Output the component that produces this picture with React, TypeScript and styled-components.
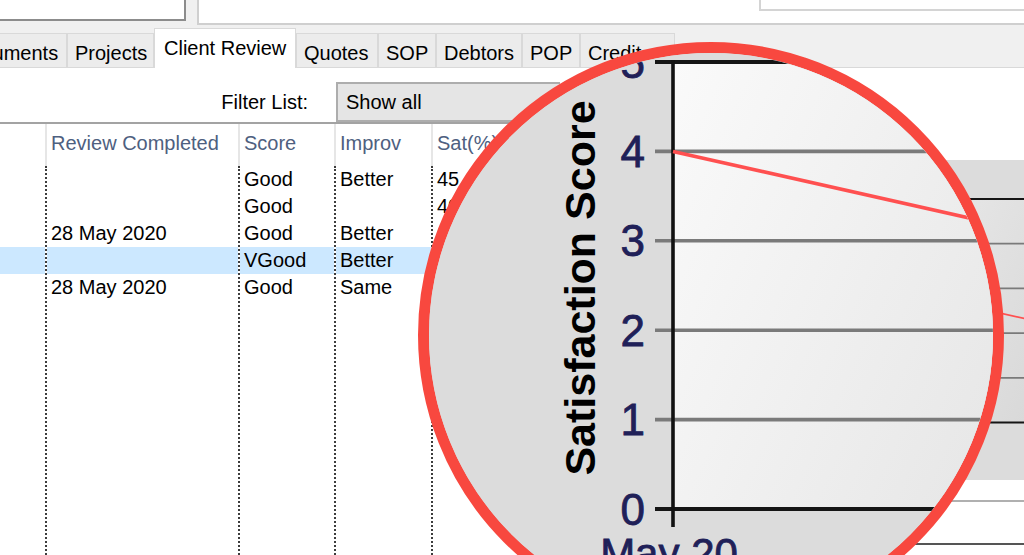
import React from 'react';
import styled, { createGlobalStyle } from 'styled-components';

const GlobalStyle = createGlobalStyle`
	html,
	body {
		margin: 0;
		padding: 0;
		overflow: hidden;
		background: #ffffff;
	}
	body {
		font-family: 'Liberation Sans', Arial, sans-serif;
	}
`;

const Screen = styled.div`
	position: relative;
	display: flex;
	flex-direction: column;
	width: 1024px;
	height: 555px;
	overflow: hidden;
	background: #f0f0f0;
	color: #000;
	font-size: 20px;
`;

/* top edge of the window: bits of the fields above the tabs */
const TopStrip = styled.div`
	display: flex;
	align-items: flex-start;
	height: 28px;
`;
const NameBox = styled.div`
	box-sizing: border-box;
	width: 186px;
	height: 21px;
	background: #fff;
	border-right: 2px solid #8c8c8c;
	border-bottom: 2px solid #8c8c8c;
`;
const DetailBox = styled.div`
	box-sizing: border-box;
	display: flex;
	justify-content: flex-end;
	flex: 1;
	height: 25px;
	margin-left: 11px;
	background: #fff;
	border-left: 2px solid #cfcfcf;
	border-bottom: 2px solid #cfcfcf;
`;
const NoteBox = styled.div`
	box-sizing: border-box;
	width: 265px;
	height: 11px;
	border-left: 2px solid #d4d4d4;
	border-bottom: 2px solid #d4d4d4;
`;

const TabBar = styled.div`
	display: flex;
	align-items: flex-end;
	height: 40px;
	box-shadow: inset 0 -1px 0 #d9d9d9;
`;
const TabRow = styled.div`
	display: flex;
	align-items: flex-end;
	margin-left: -51px;
`;
const Tab = styled.div<{ $w: number; $active?: boolean }>`
	box-sizing: border-box;
	display: flex;
	align-items: center;
	flex: 0 0 ${(p) => p.$w}px;
	height: ${(p) => (p.$active ? 40 : 35)}px;
	padding: ${(p) => (p.$active ? '0 0 0 9px' : '5px 0 0 7px')};
	background: ${(p) => (p.$active ? '#ffffff' : '#ececec')};
	border: 1px solid #d9d9d9;
	border-bottom: ${(p) => (p.$active ? 'none' : '1px solid #d9d9d9')};
	white-space: nowrap;
	overflow: hidden;
`;

const Content = styled.div`
	display: flex;
	flex: 1;
	min-height: 0;
	background: #fff;
`;
const ListPane = styled.div`
	display: flex;
	flex-direction: column;
	flex: 0 0 560px;
`;
const FilterRow = styled.div`
	display: flex;
	align-items: center;
	height: 40px;
	margin-top: 14px;
`;
const FilterLabel = styled.label`
	flex: 0 0 308px;
	text-align: right;
`;
const Dropdown = styled.div`
	box-sizing: border-box;
	display: flex;
	align-items: center;
	flex: 1;
	height: 40px;
	margin-left: 28px;
	padding-left: 8px;
	background: #e5e5e5;
	border: 2px solid #adadad;
	border-right: none;
`;

const ListView = styled.div`
	display: flex;
	flex-direction: column;
	flex: 1;
	border-top: 2px solid #a3a3a3;
`;
const HeaderRow = styled.div`
	display: flex;
	height: 42px;
`;
const HeaderCell = styled.div<{ $w: number; $divider: boolean }>`
	box-sizing: border-box;
	display: flex;
	align-items: center;
	width: ${(p) => p.$w}px;
	padding: 0 0 4px 4px;
	border-left: ${(p) => (p.$divider ? '2px solid #e6e6e6' : 'none')};
	color: #4e6080;
	white-space: nowrap;
	overflow: hidden;
`;
const ListBody = styled.div`
	display: flex;
	flex: 1;
`;
const Column = styled.div<{ $w: number; $divider: boolean }>`
	box-sizing: border-box;
	width: ${(p) => p.$w}px;
	border-left: ${(p) => (p.$divider ? '2px dotted #3c3c3c' : 'none')};
`;
const Cell = styled.div<{ $selected: boolean }>`
	height: 27px;
	line-height: 27px;
	padding-left: 4px;
	white-space: nowrap;
	overflow: hidden;
	background: ${(p) => (p.$selected ? '#cce8ff' : 'transparent')};
`;

const ChartPane = styled.div`
	display: flex;
	flex-direction: column;
	flex: 1;
	padding-top: 92px;
`;
const ChartPanel = styled.div`
	height: 320px;
	background: #dcdcdc;

	svg {
		display: block;
	}
`;
const LowerGrid = styled.div`
	height: 41px;
	margin-top: 20px;
	border-top: 2px solid #b0b0b0;
	border-bottom: 2px solid #555555;
`;

/* magnifier ring drawn over the page */
const Lens = styled.div`
	position: absolute;
	left: 418px;
	top: 42px;
	box-sizing: border-box;
	width: 586px;
	height: 586px;
	border: 11px solid #f8483f;
	border-radius: 50%;
	overflow: hidden;
	background: #dcdcdc;

	svg {
		display: block;
	}
`;

const TABS = [
	{ label: 'Documents', w: 118 },
	{ label: 'Projects', w: 87 },
	{ label: 'Client Review', w: 142, active: true },
	{ label: 'Quotes', w: 82 },
	{ label: 'SOP', w: 58 },
	{ label: 'Debtors', w: 86 },
	{ label: 'POP', w: 58 },
	{ label: 'Credit', w: 95 },
];

const COLS = [
	{ title: '', w: 45 },
	{ title: 'Review Completed', w: 193 },
	{ title: 'Score', w: 96 },
	{ title: 'Improv', w: 97 },
	{ title: 'Sat(%)', w: 129 },
];

const ROWS = [
	['', '', 'Good', 'Better', '45'],
	['', '', 'Good', '', '40'],
	['', '28 May 2020', 'Good', 'Better', '60'],
	['', '', 'VGood', 'Better', '80'],
	['', '28 May 2020', 'Good', 'Same', '60'],
];
const SELECTED = 3;

// chart is drawn in page coordinates so the lens can reuse it at 2x
const GRID_Y = [199, 243.7, 288.4, 333.1, 377.8, 422.5];
const AXIS_X = 692;
const FONT = "'Liberation Sans', Arial, sans-serif";
const NAVY = '#202058';

const ChartLayer: React.FC<{ id: string }> = ({ id }) => (
	<>
		<defs>
			<linearGradient id={`${id}-plot`} x1="0" y1="0" x2="1" y2="0.25">
				<stop offset="0" stopColor="#fafafa" />
				<stop offset="1" stopColor="#d9d9d9" />
			</linearGradient>
		</defs>
		<rect x={540} y={150} width={560} height={350} fill="#dcdcdc" />
		<rect
			x={AXIS_X}
			y={GRID_Y[0]}
			width={408}
			height={GRID_Y[5] - GRID_Y[0]}
			fill={`url(#${id}-plot)`}
		/>
		{GRID_Y.map((y, i) => {
			const edge = i === 0 || i === GRID_Y.length - 1;
			return (
				<line
					key={y}
					x1={683}
					x2={1100}
					y1={y}
					y2={y}
					stroke={edge ? '#151515' : '#7a7a7a'}
					strokeWidth={edge ? 2.1 : 1.8}
				/>
			);
		})}
		<line
			x1={AXIS_X}
			x2={AXIS_X}
			y1={GRID_Y[0] - 1}
			y2={431.5}
			stroke="#111"
			strokeWidth={1.8}
		/>
		{GRID_Y.map((y, i) => (
			<text
				key={`l${y}`}
				x={678}
				y={y}
				textAnchor="end"
				dominantBaseline="central"
				fontFamily={FONT}
				fontSize={22}
				fill={NAVY}
				stroke={NAVY}
				strokeWidth={0.4}>
				{5 - i}
			</text>
		))}
		<text
			transform="translate(645.5 312) rotate(-90)"
			textAnchor="middle"
			dominantBaseline="central"
			fontFamily={FONT}
			fontWeight="bold"
			fontSize={21.5}
			fill="#000">
			Satisfaction Score
		</text>
		<text
			x={690}
			y={452}
			textAnchor="middle"
			fontFamily={FONT}
			fontSize={21}
			fill={NAVY}
			stroke={NAVY}
			strokeWidth={0.4}>
			May 20
		</text>
		<line
			x1={AXIS_X}
			y1={GRID_Y[1]}
			x2={1100}
			y2={GRID_Y[1] + 0.225 * (1100 - AXIS_X)}
			stroke="#ff5050"
			strokeWidth={1.8}
		/>
	</>
);

const App: React.FC = () => {
	return (
		<Screen>
			<GlobalStyle />
			<TopStrip>
				<NameBox />
				<DetailBox>
					<NoteBox />
				</DetailBox>
			</TopStrip>
			<TabBar>
				<TabRow>
					{TABS.map((t) => (
						<Tab key={t.label} $w={t.w} $active={t.active}>
							{t.label}
						</Tab>
					))}
				</TabRow>
			</TabBar>
			<Content>
				<ListPane>
					<FilterRow>
						<FilterLabel>Filter List:</FilterLabel>
						<Dropdown>Show all</Dropdown>
					</FilterRow>
					<ListView>
						<HeaderRow>
							{COLS.map((c, i) => (
								<HeaderCell key={i} $w={c.w} $divider={i > 0}>
									{c.title}
								</HeaderCell>
							))}
						</HeaderRow>
						<ListBody>
							{COLS.map((c, ci) => (
								<Column key={ci} $w={c.w} $divider={ci > 0}>
									{ROWS.map((r, ri) => (
										<Cell key={ri} $selected={ri === SELECTED}>
											{r[ci]}
										</Cell>
									))}
								</Column>
							))}
						</ListBody>
					</ListView>
				</ListPane>
				<ChartPane>
					<ChartPanel>
						<svg width={464} height={320} viewBox="560 160 464 320">
							<ChartLayer id="base" />
						</svg>
					</ChartPanel>
					<LowerGrid />
				</ChartPane>
			</Content>
			<Lens>
				<svg width={564} height={564} viewBox="570 194.5 282 282">
					<ChartLayer id="lens" />
				</svg>
			</Lens>
		</Screen>
	);
};

export default App;
